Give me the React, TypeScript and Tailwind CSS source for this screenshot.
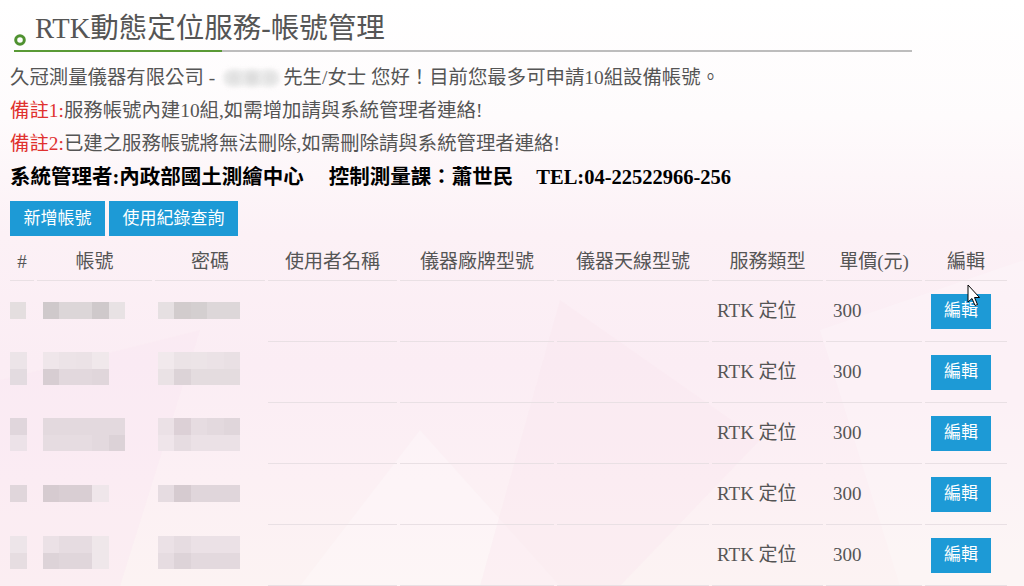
import React from "react";

const FONT = '"Liberation Serif", "Noto Sans CJK TC", serif';

type Mosaic = { w: number; rows: string[][] };

const rowsData: { h: Mosaic; a: Mosaic; p: Mosaic; pad: number }[] = [
  {
    pad: 21,
    h: { w: 16, rows: [["#e4dedf"]] },
    a: { w: 16.4, rows: [["#cfc9cb", "#dcd6d8", "#dcd6d8", "#cfc9cb", "#e8e2e4"]] },
    p: { w: 16.4, rows: [["#e6e0e2", "#d2cccd", "#d4cfd0", "#ddd7d9", "#ddd7d9"]] },
  },
  {
    pad: 10,
    h: { w: 17, rows: [["#ece4e8"], ["#e3dbe0"]] },
    a: {
      w: 16.4,
      rows: [
        ["#efe6ea", "#ece3e7", "#ebe2e6", "#f0e8eb"],
        ["#d7cdd2", "#e2d8dd", "#e2d8dd", "#e0d6db"],
      ],
    },
    p: {
      w: 16.4,
      rows: [
        ["#f1e9ec", "#ebe3e6", "#ece4e7", "#ebe2e6", "#e9e0e4"],
        ["#eae2e5", "#dcd3d7", "#e4dcdf", "#e4dcdf", "#e4dcdf"],
      ],
    },
  },
  {
    pad: 15,
    h: { w: 17, rows: [["#e0d6dc"], ["#ece2e8"]] },
    a: {
      w: 16.4,
      rows: [
        ["#e3d9de", "#e3d9de", "#e3d9de", "#e3d9de", "#e3d9de"],
        ["#e6dce1", "#e6dce1", "#e6dce1", "#e3d9de", "#dcd2d7"],
      ],
    },
    p: {
      w: 16.4,
      rows: [
        ["#ebe1e6", "#dcd0d6", "#e6dce1", "#e3d9de", "#e0d6db"],
        ["#efe5ea", "#e6dce1", "#ebe1e6", "#ebe1e6", "#ebe1e6"],
      ],
    },
  },
  {
    pad: 21,
    h: { w: 17, rows: [["#e0d6db"]] },
    a: { w: 16.4, rows: [["#d6cbd0", "#d9ced3", "#d9ced3", "#efe6ea"]] },
    p: { w: 16.4, rows: [["#e6dce1", "#d6cbd0", "#e0d6db", "#e0d6db", "#e0d6db"]] },
  },
  {
    pad: 11,
    h: { w: 17, rows: [["#ede5e9"], ["#e6dde1"]] },
    a: {
      w: 16.4,
      rows: [
        ["#ebe1e6", "#e6dce1", "#e6dce1", "#efe7ea"],
        ["#ddd3d8", "#e0d6db", "#e0d6db", "#efe7ea"],
      ],
    },
    p: {
      w: 16.4,
      rows: [
        ["#ebe1e6", "#e6dce1", "#ebe1e6", "#ebe1e6", "#ebe1e6"],
        ["#e6dce1", "#ddd3d8", "#e3d9de", "#e3d9de", "#e3d9de"],
      ],
    },
  },
];

function MosaicBlock({ m }: { m: Mosaic }) {
  return (
    <div className="flex flex-col">
      {m.rows.map((r, i) => (
        <div key={i} className="flex">
          {r.map((c, j) => (
            <div key={j} style={{ width: m.w, height: 16.5, background: c }} />
          ))}
        </div>
      ))}
    </div>
  );
}

const headers = [
  "#",
  "帳號",
  "密碼",
  "使用者名稱",
  "儀器廠牌型號",
  "儀器天線型號",
  "服務類型",
  "單價(元)",
  "編輯",
];

const GRID =
  "grid grid-cols-[27px_118px_113px_132px_157px_155px_114px_99px_85px]";

export default function App() {
  return (
    <div
      className="relative w-[1024px] h-[586px] overflow-hidden bg-[linear-gradient(180deg,#ffffff_0%,#fefbfc_20%,#fcf1f6_40%,#fbedf4_62%,#fcf0f4_82%,#fcf3f3_100%)] text-[#555555]"
      style={{ fontFamily: FONT }}
    >
      {/* faint background facets */}
      <svg className="absolute inset-0 pointer-events-none" width="1024" height="586">
        <polygon points="420,430 560,586 300,586" fill="#ffffff" opacity="0.25" />
        <polygon points="820,330 1024,260 1024,586 900,586" fill="#ffffff" opacity="0.22" />
        <polygon points="560,300 760,440 620,586 480,586" fill="#f9e6ef" opacity="0.35" />
        <polygon points="0,380 200,330 120,586 0,586" fill="#f9e4f0" opacity="0.35" />
      </svg>

      <div className="relative pl-[10px]">
        {/* Title */}
        <div className="pl-[4px] pt-[10px]">
          <div className="flex items-end h-[38px]">
            <svg className="shrink-0 mb-[2px] mr-[9px]" width="12" height="12" viewBox="0 0 12 12">
              <circle cx="6" cy="6" r="4.3" fill="none" stroke="#4f9130" strokeWidth="3" />
            </svg>
            <span className="text-[28.5px] leading-[38px] text-[#555555]">
              RTK動態定位服務-帳號管理
            </span>
          </div>
          <div className="flex w-[898px] h-[2px] mt-[2px]">
            <div className="w-[208px] bg-[#5a9a36]" />
            <div className="flex-1 bg-[#bdbdbd]" />
          </div>
        </div>

        {/* Info lines */}
        <div className="mt-[9px] text-[19.4px] leading-[33px]">
          <div className="flex items-center">
            <span>久冠測量儀器有限公司 -</span>
            <span className="relative ml-[6px] mr-[2px] inline-block w-[60px] h-[22px]">
              <span className="absolute left-[2px] top-[3px] w-[56px] h-[16px] rounded-[8px] bg-[#eeeeee] blur-[2px]" />
              <span className="absolute left-[6px] top-[4px] w-[14px] h-[14px] rounded-full bg-[#e0e0e0] blur-[3px]" />
              <span className="absolute left-[24px] top-[4px] w-[14px] h-[14px] rounded-full bg-[#dcdcdc] blur-[3px]" />
              <span className="absolute left-[42px] top-[4px] w-[14px] h-[14px] rounded-full bg-[#e2e2e2] blur-[3px]" />
            </span>
            <span>先生/女士 您好！目前您最多可申請10組設備帳號。</span>
          </div>
          <div>
            <span className="text-[#e0312f]">備註1:</span>
            服務帳號內建10組,如需增加請與系統管理者連絡!
          </div>
          <div>
            <span className="text-[#e0312f]">備註2:</span>
            已建之服務帳號將無法刪除,如需刪除請與系統管理者連絡!
          </div>
          <div className="flex items-center font-bold text-[20.5px] leading-[34px] text-black">
            <span>系統管理者:內政部國土測繪中心</span>
            <span className="inline-block w-[25px]" />
            <span>控制測量課：蕭世民</span>
            <span className="inline-block w-[23px]" />
            <span>TEL:04-22522966-256</span>
          </div>
        </div>

        {/* Buttons */}
        <div className="mt-[7px] flex gap-[4px]">
          <button className="h-[35px] w-[95px] bg-[#1d9ad6] text-white text-[17px]">
            新增帳號
          </button>
          <button className="h-[35px] w-[129px] bg-[#1d9ad6] text-white text-[17px]">
            使用紀錄查詢
          </button>
        </div>

        {/* Table */}
        <div className="w-[1000px] text-[19px]">
          <div className={GRID}>
            {headers.map((h) => (
              <div
                key={h}
                className="mr-[3px] h-[45px] pt-[12px] text-center leading-[28px] border-b border-[#e9e0e4]"
              >
                {h}
              </div>
            ))}
          </div>
          {rowsData.map((r, i) => (
            <div key={i} className={GRID + " h-[61px]"}>
              <div className="mr-[3px]" style={{ paddingTop: r.pad }}>
                <MosaicBlock m={r.h} />
              </div>
              <div className="mr-[3px] pl-[6px]" style={{ paddingTop: r.pad }}>
                <MosaicBlock m={r.a} />
              </div>
              <div className="mr-[3px] pl-[3px]" style={{ paddingTop: r.pad }}>
                <MosaicBlock m={r.p} />
              </div>
              <div className="mr-[3px] border-b border-[#e9e0e4]" />
              <div className="mr-[3px] border-b border-[#e9e0e4]" />
              <div className="mr-[3px] border-b border-[#e9e0e4]" />
              <div className="mr-[3px] pl-[5px] flex items-center border-b border-[#e9e0e4]">
                RTK 定位
              </div>
              <div className="mr-[3px] pl-[7px] flex items-center border-b border-[#e9e0e4]">
                300
              </div>
              <div className="mr-[3px] pl-[6px] flex items-center border-b border-[#e9e0e4]">
                <button className="h-[35px] w-[60px] bg-[#1d9ad6] text-white text-[17px]">
                  編輯
                </button>
              </div>
            </div>
          ))}
        </div>
      </div>

      {/* mouse cursor */}
      <svg
        className="absolute left-[967px] top-[284px] pointer-events-none"
        width="16"
        height="24"
        viewBox="0 0 16 24"
      >
        <path
          d="M1 1 L1 18 L5 14.5 L8 21.5 L10.5 20.5 L7.5 13.5 L12.5 13.5 Z"
          fill="#ffffff"
          stroke="#000000"
          strokeWidth="1"
          strokeLinejoin="round"
        />
      </svg>
    </div>
  );
}
